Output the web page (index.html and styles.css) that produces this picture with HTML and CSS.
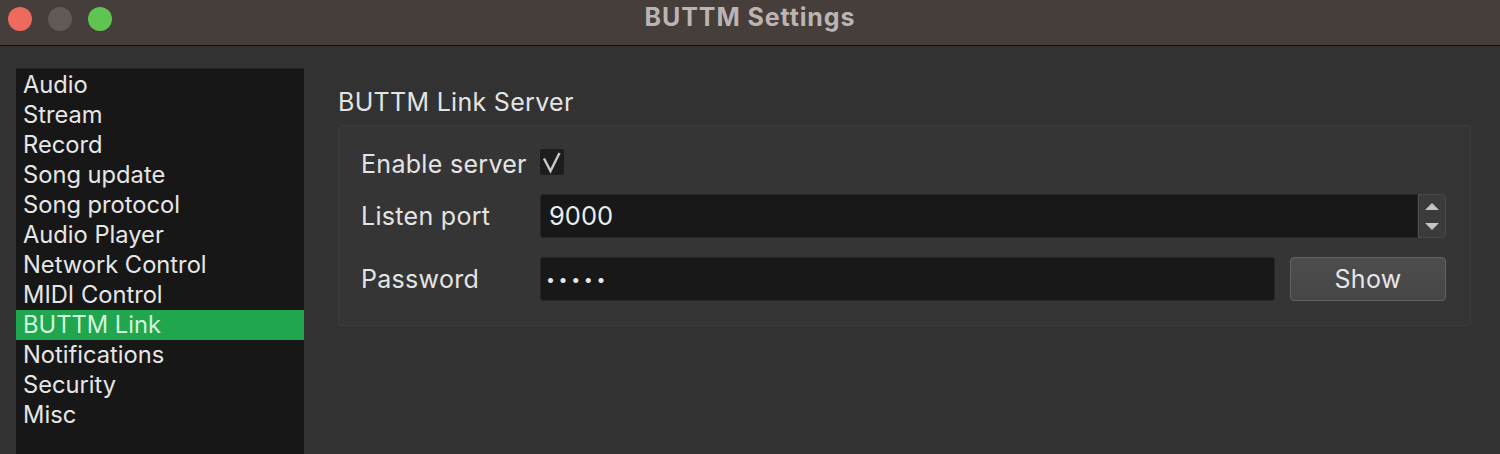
FILE: index.html
```html
<!DOCTYPE html>
<html>
<head>
<meta charset="utf-8">
<link rel="stylesheet" href="styles.css">
</head>
<body>
<div class="window">
  <div class="titlebar">
    <div class="lights">
      <span class="light red"></span>
      <span class="light grey"></span>
      <span class="light green"></span>
    </div>
    <div class="title">BUTTM Settings</div>
    <div></div>
  </div>
  <div class="content">
    <ul class="sidebar">
      <li>Audio</li>
      <li>Stream</li>
      <li>Record</li>
      <li>Song update</li>
      <li>Song protocol</li>
      <li>Audio Player</li>
      <li>Network Control</li>
      <li>MIDI Control</li>
      <li class="selected">BUTTM Link</li>
      <li>Notifications</li>
      <li>Security</li>
      <li>Misc</li>
    </ul>
    <div class="main">
      <div class="group-title">BUTTM Link Server</div>
      <div class="group">
        <div class="label">Enable server</div>
        <div class="cell"><span class="checkbox"><svg width="24" height="26" viewBox="0 0 24 26"><path d="M4 9.5 L10.5 22 L19.5 4" fill="none" stroke="#c9c9c9" stroke-width="2.4" stroke-linejoin="miter"/></svg></span></div>
        <div class="label">Listen port</div>
        <div class="cell spin">
          <div class="field">9000</div>
          <div class="spinner">
            <svg width="28" height="44" viewBox="0 0 28 44"><path d="M14 8 L21 15 L7 15 Z" fill="#c4c4c4"/><path d="M7 28 L21 28 L14 35 Z" fill="#c4c4c4"/></svg>
          </div>
        </div>
        <div class="label">Password</div>
        <div class="cell pass">
          <div class="field dots">•••••</div>
          <div class="button">Show</div>
        </div>
      </div>
    </div>
  </div>
</div>
</body>
</html>
```
FILE: styles.css
```css
html, body {
  margin: 0;
  padding: 0;
}
body {
  width: 1500px;
  height: 454px;
  overflow: hidden;
  background: #323232;
  font-family: Inter, "Liberation Sans", sans-serif;
  color: #e4e4e4;
}
.window {
  display: flex;
  flex-direction: column;
  height: 454px;
}
.titlebar {
  height: 45px;
  background: #463e3a;
  border-bottom: 1px solid #0e0e0e;
  display: grid;
  grid-template-columns: 1fr auto 1fr;
  align-items: center;
}
.lights {
  display: flex;
  gap: 16px;
  padding-left: 8px;
  padding-bottom: 8px;
}
.light {
  width: 24px;
  height: 24px;
  border-radius: 50%;
  display: block;
}
.red { background: #ee6a5e; }
.grey { background: #625a58; }
.green { background: #5fc452; }
.title {
  font-size: 25px;
  font-weight: 700;
  color: #bcb4b2;
  padding-bottom: 12px;
  letter-spacing: 0.9px;
}
.content {
  flex: 1;
  display: flex;
  padding: 22px 0 0 16px;
}
.sidebar {
  list-style: none;
  margin: 0;
  padding: 1px 0 0 0;
  width: 288px;
  background: #171717;
  border-top: 1px solid #262626;
}
.sidebar li {
  height: 30px;
  line-height: 30px;
  padding-left: 7px;
  font-size: 23.7px;
  color: #e6e6e6;
}
.sidebar li.selected {
  background: #1fa64f;
  color: #d6f5dc;
}
.main {
  margin-left: 34px;
  padding-top: 20px;
  width: 1133px;
}
.group-title {
  font-size: 25px;
  line-height: 28px;
  letter-spacing: 0.3px;
  color: #e4e4e4;
  margin-bottom: 9px;
}
.group {
  border: 1px solid #3c3c3c;
  border-radius: 3px;
  background: #353535;
  display: grid;
  grid-template-columns: 179px 1fr;
  grid-template-rows: 26px 44px 44px;
  row-gap: 19px;
  padding: 23px 24px 24px 22px;
  align-items: center;
}
.group .label {
  font-size: 25px;
  letter-spacing: 0.3px;
  color: #e4e4e4;
}
.group .label:first-child {
  padding-top: 3px;
}
.cell {
  display: flex;
  align-items: stretch;
  height: 100%;
}
.checkbox {
  display: block;
  width: 24px;
  height: 26px;
  background: #1d1d1d;
  border-radius: 2px;
}
.checkbox svg { display: block; }
.spin { height: 44px; }
.field {
  flex: 1;
  background: #181818;
  border: 1px solid #252525;
  border-radius: 3px 0 0 3px;
  font-size: 25.5px;
  line-height: 42px;
  padding-left: 8px;
  color: #ececec;
}
.spinner {
  width: 26px;
  background: #3b3b3b;
  border: 1px solid #4a4a4a;
  border-radius: 0 5px 5px 0;
  overflow: hidden;
}
.spinner svg { display: block; margin-left: -1px; }
.pass {
  gap: 15px;
  height: 44px;
}
.pass .field {
  border-radius: 3px;
}
.dots {
  font-size: 16px;
  letter-spacing: 3.6px;
  padding-left: 5px;
  color: #e8e8e8;
}
.button {
  width: 154px;
  background: linear-gradient(#4d4d4d, #464646);
  border: 1px solid #626262;
  border-radius: 4px;
  display: flex;
  align-items: center;
  justify-content: center;
  font-size: 25px;
  letter-spacing: 0.3px;
  color: #e6e6e6;
}
```
